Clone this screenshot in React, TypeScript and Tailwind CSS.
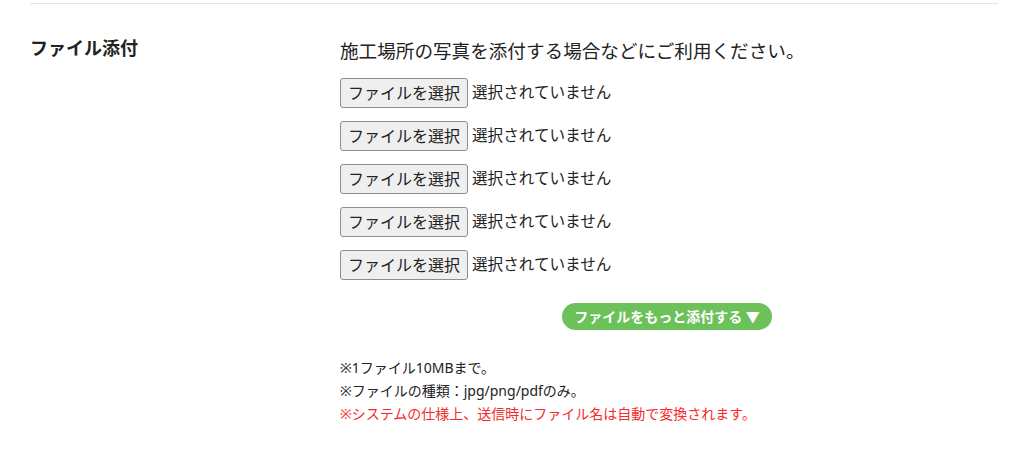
const FileRow = () => (
  <div className="flex items-center h-[30px]">
    <button className="h-[30px] px-[7px] bg-[#efefef] border border-[#8d8d8d] rounded-[3px] text-[16px] text-[#222] leading-none">
      ファイルを選択
    </button>
    <span className="ml-[4px] text-[15.6px] text-[#222]">選択されていません</span>
  </div>
);

const App = () => {
  return (
    <div className="w-[1024px] h-[453px] bg-white px-[30px] font-['Noto_Sans','Noto_Sans_CJK_JP',sans-serif] text-[#222]">
      <div className="border-t border-[#e3e3e3] mt-[3px] w-[968px]" />
      <div className="flex pt-[32px]">
        <div className="w-[310px] text-[18px] font-bold leading-[24px]">ファイル添付</div>
        <div className="flex-1">
          <p className="text-[18.6px] leading-[26px] mt-[2px]">施工場所の写真を添付する場合などにご利用ください。</p>
          <div className="flex flex-col gap-[13px] mt-[14px]">
            <FileRow />
            <FileRow />
            <FileRow />
            <FileRow />
            <FileRow />
          </div>
          <div className="flex justify-center mt-[23px]">
            <button className="h-[27px] px-[12px] rounded-full bg-[#6cc15a] text-white text-[14px] font-bold leading-none">
              ファイルをもっと添付する ▼
            </button>
          </div>
          <div className="mt-[26px] text-[14px] leading-[23px]">
            <p>※1ファイル10MBまで。</p>
            <p>※ファイルの種類：jpg/png/pdfのみ。</p>
            <p className="text-[#f52a2a]">※システムの仕様上、送信時にファイル名は自動で変換されます。</p>
          </div>
        </div>
      </div>
    </div>
  );
};

export default App;
